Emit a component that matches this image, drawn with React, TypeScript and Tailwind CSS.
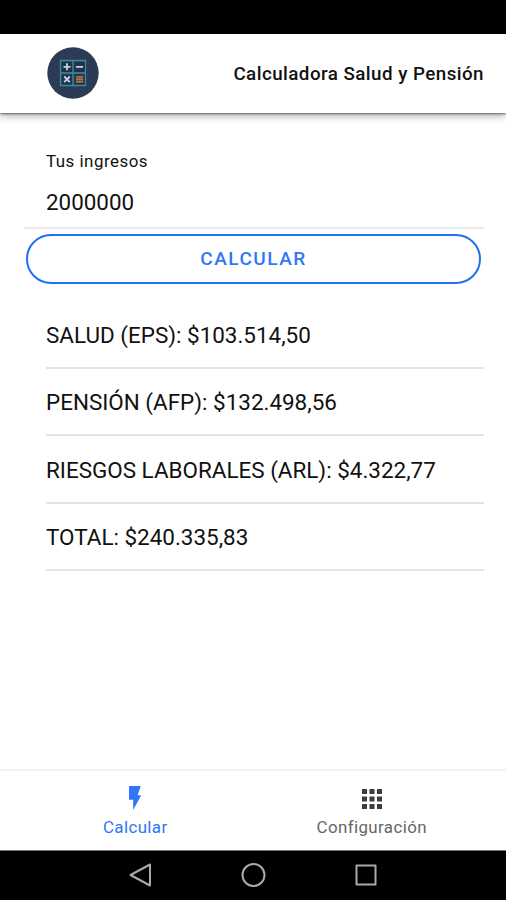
interface Result {
  label: string
  value: string
}

const RESULTS: Result[] = [
  { label: 'SALUD (EPS)', value: '$103.514,50' },
  { label: 'PENSIÓN (AFP)', value: '$132.498,56' },
  { label: 'RIESGOS LABORALES (ARL)', value: '$4.322,77' },
  { label: 'TOTAL', value: '$240.335,83' },
]

function Logo() {
  return (
    <svg viewBox="0 0 52 52" className="w-[52px] h-[52px]" fill="none" aria-hidden="true">
      <circle cx="26" cy="26" r="25.7" fill="#2c3a56" />
      <g fill="#25314a">
        <rect x="15" y="15" width="10" height="10" />
        <rect x="28" y="15" width="10" height="10" />
        <rect x="15" y="28" width="10" height="10" />
        <rect x="28" y="28" width="10" height="10" />
      </g>
      <path d="M13.5 13.5h25v25h-25zM26 13.5v25M13.5 26h25" stroke="#32909f" strokeWidth="1.3" strokeLinejoin="round" />
      <path d="M16.5 19.8h7M20 16.3v7M29 19.8h7M17.2 29.5l5.6 5.6M22.8 29.5l-5.6 5.6" stroke="#c9d2df" strokeWidth="1.8" />
      <path d="M29 29.9h7.2M29 32.3h7.2M29 34.7h7.2" stroke="#a8743f" strokeWidth="1.9" />
    </svg>
  )
}

function FlashIcon() {
  return (
    <svg viewBox="0 0 14 26" className="w-[14px] h-[26px]" fill="currentColor" aria-hidden="true">
      <path d="M1 1h11.8L9.6 10.3h3.6L5.2 25V14.7H1z" />
    </svg>
  )
}

function GridIcon() {
  return (
    <svg viewBox="0 0 20 20" className="w-5 h-5" fill="currentColor" aria-hidden="true">
      <path d="M0 0h5v5H0zM7.5 0h5v5h-5zM15 0h5v5h-5zM0 7.5h5v5H0zM7.5 7.5h5v5h-5zM15 7.5h5v5h-5zM0 15h5v5H0zM7.5 15h5v5h-5zM15 15h5v5h-5z" />
    </svg>
  )
}

export default function App() {
  return (
    <div className="flex flex-col w-[506px] h-[900px] overflow-hidden bg-white font-['Roboto',sans-serif] text-[#111]">
      {/* Status bar */}
      <div className="h-[34px] shrink-0 bg-black" />

      <header className="flex items-center justify-between h-[79px] shrink-0 pl-[47px] pr-[22px] pb-px bg-white shadow-[0_1px_2px_rgba(0,0,0,0.5),0_3px_8px_rgba(0,0,0,0.3)]">
        <Logo />
        <h1 className="pt-px text-[18.8px] leading-6 font-medium tracking-[0.45px] whitespace-nowrap">Calculadora Salud y Pensión</h1>
      </header>

      <main className="flex-1 min-h-0 px-[22px] pt-[37px]">
        <div className="ml-0.5 pl-[22px] h-[79px] border-b-2 border-[#ebebeb]">
          <label htmlFor="ingresos" className="block h-[22px] text-[16.9px] leading-[22px] tracking-[0.5px]">
            Tus ingresos
          </label>
          <input
            id="ingresos"
            type="text"
            inputMode="numeric"
            defaultValue="2000000"
            className="block w-full h-[30px] mt-[15px] text-[22.4px] leading-[30px] outline-none"
          />
        </div>

        <button
          type="button"
          className="block w-[455px] h-[50px] mt-[5px] ml-1 rounded-full border-2 border-[#2070f4] text-[#2f77f8] text-[19px] font-medium tracking-[1.5px]"
        >
          CALCULAR
        </button>

        <ul className="mt-[17.4px] ml-6">
          {RESULTS.map(({ label, value }) => (
            <li key={label} className="flex items-center h-[67.5px] pt-[3px] border-b-2 border-[#e4e4e4] text-[22.45px] whitespace-nowrap">
              {label}: {value}
            </li>
          ))}
        </ul>
      </main>

      {/* Tab bar */}
      <nav className="flex h-[81px] shrink-0 pl-[17px] pr-4 border-t-2 border-[#f2f2f2] text-[16.9px] leading-5 tracking-[0.4px]">
        <a className="flex-1 flex flex-col items-center pt-[14px] text-[#2f77f8]">
          <FlashIcon />
          <span className="mt-1.5">Calcular</span>
        </a>
        <a className="flex-1 flex flex-col items-center pt-[18px] text-[#666]">
          <span className="h-5 text-[#3c3c3c]"><GridIcon /></span>
          <span className="mt-2">Configuración</span>
        </a>
      </nav>

      {/* System navigation */}
      <div className="flex h-[50px] shrink-0 items-center justify-center gap-[87px] pb-px border-t border-[#777] bg-black text-[#aaa]">
        <svg viewBox="0 0 26 26" className="w-[26px] h-[26px]" fill="none" stroke="currentColor" strokeWidth="2" strokeLinejoin="round" aria-hidden="true">
          <path d="M23 2.5v21L3.5 13z" />
        </svg>
        <svg viewBox="0 0 26 26" className="w-[26px] h-[26px]" fill="none" stroke="currentColor" strokeWidth="2" aria-hidden="true">
          <circle cx="13.5" cy="13" r="11" />
        </svg>
        <svg viewBox="0 0 26 26" className="w-[26px] h-[26px]" fill="none" stroke="currentColor" strokeWidth="2" strokeLinejoin="round" aria-hidden="true">
          <path d="M3.5 3.5h19v19h-19z" />
        </svg>
      </div>
    </div>
  )
}
